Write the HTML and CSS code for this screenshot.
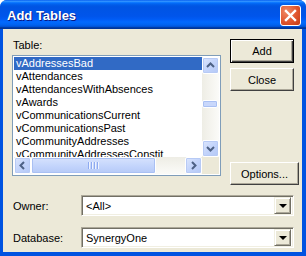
FILE: index.html
```html
<!DOCTYPE html>
<html lang="en">
<head>
    <meta charset="UTF-8">
    <title>Add Tables</title>
    <link rel="stylesheet" href="styles.css">
</head>
<body>
    <div class="window">
        <!-- Title Bar -->
        <div class="titlebar">
            <span class="title">Add Tables</span>
            <div class="close-btn">
                <svg width="13" height="13" viewBox="0 0 13 13"><path d="M2 2 L11 11 M11 2 L2 11" stroke="#fff" stroke-width="2.4" stroke-linecap="square"/></svg>
            </div>
        </div>

        <!-- Dialog Body -->
        <div class="client">
            <div class="top-section">
                <div class="table-column">
                    <div class="label table-label">Table:</div>
                    <div class="listbox">
                        <div class="list-main">
                            <div class="list-items">
                                <div class="item selected">vAddressesBad</div>
                                <div class="item">vAttendances</div>
                                <div class="item">vAttendancesWithAbsences</div>
                                <div class="item">vAwards</div>
                                <div class="item">vCommunicationsCurrent</div>
                                <div class="item">vCommunicationsPast</div>
                                <div class="item">vCommunityAddresses</div>
                                <div class="item">vCommunityAddressesConstit</div>
                            </div>
                            <!-- Vertical Scrollbar -->
                            <div class="vscroll">
                                <div class="sb-btn">
                                    <svg width="15" height="15" viewBox="0 0 15 15"><path d="M4 9 L7.5 5.5 L11 9" fill="none" stroke="#4d6185" stroke-width="2"/></svg>
                                </div>
                                <div class="vtrack">
                                    <div class="vthumb"></div>
                                </div>
                                <div class="sb-btn">
                                    <svg width="15" height="15" viewBox="0 0 15 15"><path d="M4 6 L7.5 9.5 L11 6" fill="none" stroke="#4d6185" stroke-width="2"/></svg>
                                </div>
                            </div>
                        </div>
                        <!-- Horizontal Scrollbar -->
                        <div class="hscroll">
                            <div class="sb-btn">
                                <svg width="15" height="15" viewBox="0 0 15 15"><path d="M9 4 L5.5 7.5 L9 11" fill="none" stroke="#4d6185" stroke-width="2"/></svg>
                            </div>
                            <div class="htrack">
                                <div class="hthumb">
                                    <span class="grip"></span><span class="grip"></span><span class="grip"></span><span class="grip"></span>
                                </div>
                            </div>
                            <div class="sb-btn">
                                <svg width="15" height="15" viewBox="0 0 15 15"><path d="M6 4 L9.5 7.5 L6 11" fill="none" stroke="#4d6185" stroke-width="2"/></svg>
                            </div>
                            <div class="sb-corner"></div>
                        </div>
                    </div>
                </div>

                <div class="button-column">
                    <div class="btn default">Add</div>
                    <div class="btn">Close</div>
                    <div class="btn options">Options...</div>
                </div>
            </div>

            <!-- Owner / Database -->
            <div class="field-row">
                <div class="label field-label">Owner:</div>
                <div class="combo">
                    <span class="combo-text">&lt;All&gt;</span>
                    <div class="combo-btn"><span class="triangle"></span></div>
                </div>
            </div>
            <div class="field-row database-row">
                <div class="label field-label">Database:</div>
                <div class="combo">
                    <span class="combo-text">SynergyOne</span>
                    <div class="combo-btn"><span class="triangle"></span></div>
                </div>
            </div>
        </div>
    </div>
</body>
</html>
```

FILE: styles.css
```css
/* XP style dialog */
body {
    margin: 0;
    padding: 0;
    background: #ffffff;
    font-family: 'Liberation Sans', Arial, sans-serif;
    font-size: 11px;
    color: #000;
}

.window {
    width: 306px;
    height: 256px;
    background: #0053e1;
    border-radius: 7px 7px 0 0;
    display: flex;
    flex-direction: column;
    overflow: hidden;
}

/* Title Bar */
.titlebar {
    height: 29px;
    flex-shrink: 0;
    display: flex;
    align-items: center;
    justify-content: space-between;
    padding: 0 5px 0 7px;
    background: linear-gradient(to bottom, #0058ee 0%, #3593ff 4%, #288eff 6%, #127dff 8%, #036ffc 10%, #0262ee 14%, #0057e5 20%, #0054e3 24%, #0055eb 56%, #005bf5 66%, #026afe 76%, #0062ef 86%, #0052d6 92%, #0040ab 94%, #003092 100%);
}

.title {
    color: #fff;
    font-weight: bold;
    font-size: 13px;
    text-shadow: 1px 1px 0 #0a1883;
    margin-top: 1px;
}

.close-btn {
    width: 19px;
    height: 19px;
    border: 1px solid #fff;
    border-radius: 3px;
    background: radial-gradient(circle at 30% 30%, #f08a66 0%, #e0552e 55%, #c23a13 100%);
    display: flex;
    align-items: center;
    justify-content: center;
    margin-top: 1px;
}

/* Client Area */
.client {
    flex: 1;
    margin: 0 4px 4px 3px;
    background: #ece9d8;
    padding: 10px 0 0 9px;
}

.top-section {
    display: flex;
}

.table-column {
    width: 209px;
}

.table-label {
    height: 16px;
    line-height: 13px;
    padding-left: 1px;
}

/* List Box */
.listbox {
    height: 121px;
    box-sizing: border-box;
    border: 1px solid #7f9db9;
    padding: 1px;
    background: #fff;
    display: flex;
    flex-direction: column;
}

.list-main {
    flex: 1;
    display: flex;
    overflow: hidden;
}

.list-items {
    flex: 1;
    overflow: hidden;
    padding-top: 0;
}

.item {
    height: 13px;
    line-height: 13px;
    padding-left: 2px;
    white-space: nowrap;
}

.item.selected {
    background: #316ac5;
    color: #fff;
}

/* Scrollbars */
.vscroll {
    width: 17px;
    display: flex;
    flex-direction: column;
    background: linear-gradient(to right, #eeede5, #fbfbf8);
}

.sb-btn {
    width: 15px;
    height: 15px;
    border: 1px solid #fff;
    border-radius: 2px;
    background: linear-gradient(135deg, #dce6fd 0%, #c3d4fb 50%, #b4c8f6 100%);
    box-shadow: inset 0 0 0 1px #b7caf5;
    flex-shrink: 0;
}

.sb-btn svg {
    display: block;
}

.vtrack {
    flex: 1;
}

.vthumb {
    margin: 26px 1px 0 0;
    height: 6px;
    border: 1px solid #fff;
    border-radius: 2px;
    background: #c8d7fb;
    box-shadow: inset 0 0 0 1px #a9c0f3;
}

.hscroll {
    height: 17px;
    display: flex;
    background: linear-gradient(to bottom, #eeede5, #fbfbf8);
}

.htrack {
    width: 154px;
}

.hthumb {
    width: 123px;
    height: 15px;
    border: 1px solid #fff;
    border-radius: 2px;
    background: linear-gradient(to bottom, #d6e2fd, #c1d3fb 60%, #b6caf7);
    box-shadow: inset 0 0 0 1px #a9c0f3;
    display: flex;
    align-items: center;
    justify-content: center;
    gap: 1px;
}

.grip {
    width: 1px;
    height: 7px;
    background: #8eaaf0;
    border-right: 1px solid #eef3fe;
}

.sb-corner {
    width: 17px;
    background: #ece9d8;
}

/* Buttons */
.button-column {
    margin-left: 9px;
    width: 64px;
    display: flex;
    flex-direction: column;
    gap: 5px;
}

.btn {
    height: 23px;
    box-sizing: border-box;
    background: #ece9d8;
    border-top: 1px solid #fff;
    border-left: 1px solid #fff;
    border-right: 1px solid #404040;
    border-bottom: 1px solid #404040;
    box-shadow: inset -1px -1px 0 #aca899;
    display: flex;
    align-items: center;
    justify-content: center;
}

.btn.default {
    height: 24px;
    border: 1px solid #000;
    box-shadow: inset 1px 1px 0 #fff, inset -1px -1px 0 #404040, inset -2px -2px 0 #aca899;
}

.btn.options {
    margin-top: 66px;
    width: 69px;
}

/* Owner / Database Fields */
.field-row {
    display: flex;
    align-items: center;
    margin-top: 10px;
}

.database-row {
    margin-top: 11px;
}

.field-label {
    width: 69px;
    padding-left: 1px;
    box-sizing: border-box;
}

.combo {
    width: 213px;
    height: 21px;
    box-sizing: border-box;
    background: #fff;
    border-top: 1px solid #aca899;
    border-left: 1px solid #aca899;
    border-right: 1px solid #fff;
    border-bottom: 1px solid #fff;
    box-shadow: inset 1px 1px 0 #716f64, inset -1px -1px 0 #f1efe2;
    display: flex;
    align-items: center;
    justify-content: space-between;
    padding: 2px;
}

.combo-text {
    padding-left: 2px;
}

.combo-btn {
    width: 17px;
    height: 17px;
    box-sizing: border-box;
    background: #ece9d8;
    border-top: 1px solid #f1efe2;
    border-left: 1px solid #f1efe2;
    border-right: 1px solid #716f64;
    border-bottom: 1px solid #716f64;
    box-shadow: inset 1px 1px 0 #fff, inset -1px -1px 0 #aca899;
    display: flex;
    align-items: center;
    justify-content: center;
}

.triangle {
    width: 0;
    height: 0;
    border-left: 4px solid transparent;
    border-right: 4px solid transparent;
    border-top: 4px solid #000;
    margin-top: 1px;
}
```
